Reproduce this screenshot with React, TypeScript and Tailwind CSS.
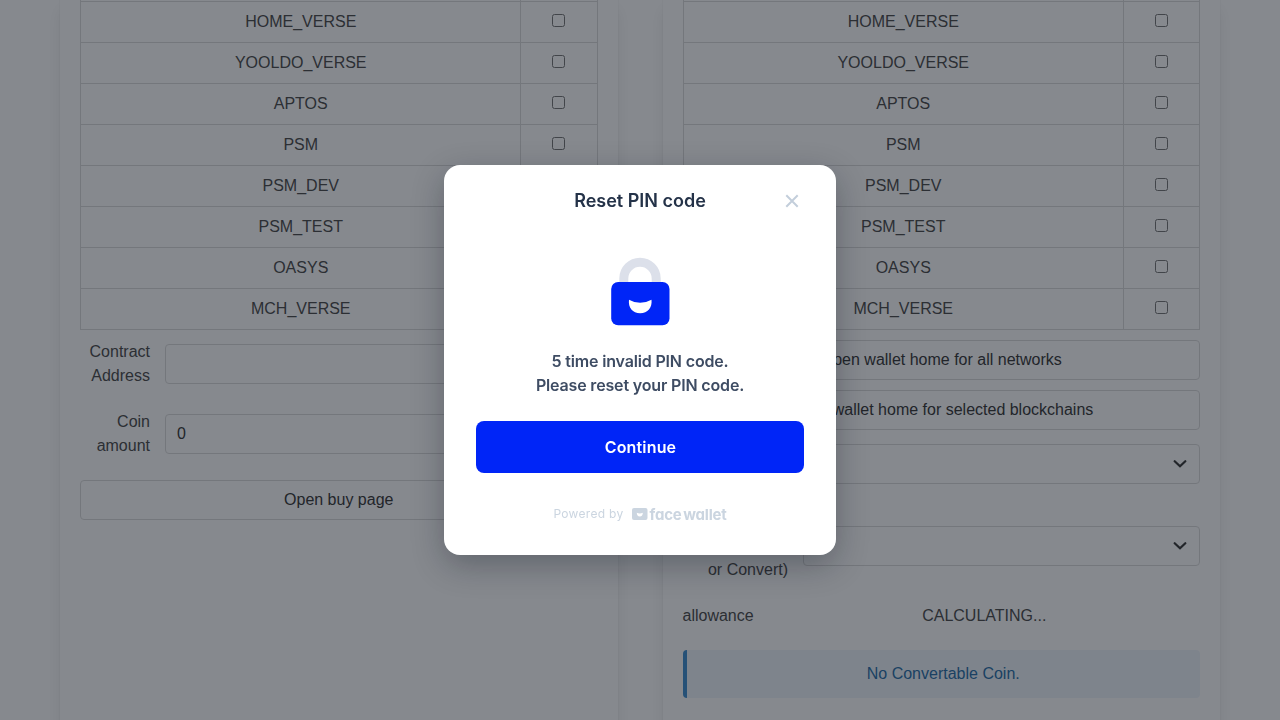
import React from 'react';

const networks = ['HOME_VERSE', 'YOOLDO_VERSE', 'APTOS', 'PSM', 'PSM_DEV', 'PSM_TEST', 'OASYS', 'MCH_VERSE'];

function NetworkTable() {
  return (
    <div className="border-x border-b border-[#dbdbdb]">
      <div className="flex h-px">
        <div className="flex-1" />
        <div className="w-[76.5px] border-l border-[#dbdbdb]" />
      </div>
      {networks.map((name) => (
        <label key={name} className="flex h-[41px] border-t border-[#dbdbdb]">
          <span className="flex-1 pt-2 pl-[0.5px] text-center">{name}</span>
          <span className="flex w-[76.5px] items-start justify-center border-l border-[#dbdbdb] pt-3">
            <input type="checkbox" className="m-0 size-[13px]" />
          </span>
        </label>
      ))}
    </div>
  );
}

function Card({ children }: { children: React.ReactNode }) {
  return (
    <section className="h-[760px] w-[557.5px] bg-white px-5 shadow-[0_8px_16px_-2px_rgba(10,10,10,0.1),0_0_0_1px_rgba(10,10,10,0.02)]">
      {children}
    </section>
  );
}

function Button({ children }: { children: React.ReactNode }) {
  return (
    <button className="flex h-10 w-full items-center justify-center rounded border border-[#dbdbdb] bg-white pb-px text-[#363636]">
      {children}
    </button>
  );
}

function Field({ label, value }: { label: string; value: string }) {
  return (
    <div className="flex gap-[15px]">
      <label className="w-[70px] text-right leading-6">{label}</label>
      <input
        readOnly
        value={value}
        className="mt-1 h-10 min-w-0 flex-1 rounded border border-[#dbdbdb] px-[11px] pb-px text-[#363636] outline-none"
      />
    </div>
  );
}

function SelectBox() {
  return (
    <div className="flex h-10 min-w-0 flex-1 items-center justify-end rounded border border-[#dbdbdb] px-3">
      <svg className="mb-px" width="14" height="8" viewBox="0 0 14 8" fill="none" stroke="#363636" strokeWidth="2.2">
        <path d="M1.7 1.2 7 6.3 12.3 1.2" strokeLinecap="round" />
      </svg>
    </div>
  );
}

function LockIcon() {
  return (
    <svg width="60" height="70" viewBox="0 0 60 70">
      <path d="M13.8 34V22.4a16.2 16.2 0 0 1 32.4 0V34" fill="none" stroke="#dce0ea" strokeWidth="9" />
      <rect x="1.2" y="26" width="58.3" height="43.2" rx="7" fill="#0025f7" />
      <path d="M19 43.7Q30 50 41.5 43.7C42.4 51.5 37.7 57.3 30.2 57.3S18 51.5 19 43.7Z" fill="#fff" />
    </svg>
  );
}

function BrandMark() {
  return (
    <span className="flex items-center">
      <svg width="16" height="12" viewBox="0 0 16 12">
        <rect width="15.5" height="12" rx="2" fill="#cbd5e0" />
        <path d="M4.8 4.8Q7.8 6.4 10.8 4.8C10.9 7.1 9.7 8.5 7.8 8.5S4.7 7.1 4.8 4.8Z" fill="#fff" />
      </svg>
      <span className="mt-px ml-[2px] whitespace-nowrap font-['Inter',sans-serif] text-[15px] leading-4 font-bold tracking-[-0.2px] [font-feature-settings:'cv11'] [word-spacing:-1.7px]">
        face wallet
      </span>
    </span>
  );
}

function ResetPinDialog() {
  return (
    <div className="fixed inset-0 flex items-center justify-center bg-[rgba(14,20,30,0.5)]">
      <div
        role="dialog"
        className="flex h-[390px] w-[392px] flex-col rounded-2xl bg-white px-8 font-['Inter',sans-serif] shadow-[0_10px_32px_rgba(10,15,30,0.3)]"
      >
        <header className="mt-6 grid h-6 grid-cols-[24px_1fr_24px] items-center">
          <h1 className="col-start-2 text-center text-[18px] leading-6 font-semibold text-[#243248]">Reset PIN code</h1>
          <button aria-label="Close" className="flex size-6 items-center justify-center">
            <svg width="14" height="14" viewBox="0 0 14 14" stroke="#c3cedb" strokeWidth="2">
              <path d="M1.3 1.3 12.7 12.7M12.7 1.3 1.3 12.7" />
            </svg>
          </button>
        </header>
        <div className="mt-[43px] flex justify-center">
          <LockIcon />
        </div>
        <p className="mt-[23px] text-center text-[16px] leading-6 font-semibold tracking-[-0.16px] text-[#3e4c63]">
          5 time invalid PIN code.
          <br />
          Please reset your PIN code.
        </p>
        <button className="mt-6 h-[52px] rounded-lg bg-[#0025f7] pl-px text-[16px] font-semibold tracking-[0.16px] text-white">Continue</button>
        <footer className="mt-[33px] flex h-4 items-center justify-center gap-2 text-[#cbd5e0]">
          <span className="text-[12px] leading-4 tracking-[0.3px]">Powered by</span>
          <BrandMark />
        </footer>
      </div>
    </div>
  );
}

export default function App() {
  return (
    <div className="h-[720px] overflow-hidden bg-white font-['Liberation_Sans',Arial,sans-serif] text-[16px] leading-6 text-[#4a4a4a]">
      <main className="flex justify-between px-[60px]">
        <Card>
          <NetworkTable />
          <div className="mt-[10px] flex flex-col gap-[22px]">
            <Field label="Contract Address" value="" />
            <Field label="Coin amount" value="0" />
            <Button>Open buy page</Button>
          </div>
        </Card>
        <Card>
          <NetworkTable />
          <div className="mt-[10px] flex flex-col gap-[10px]">
            <Button>Open wallet home for all networks</Button>
            <Button>Open wallet home for selected blockchains</Button>
          </div>
          <div className="mt-[14px] flex pl-[120.5px]">
            <SelectBox />
          </div>
          <div className="mt-[42px] flex h-14 gap-[15px]">
            <label className="w-[105.5px] self-end text-right">or Convert)</label>
            <SelectBox />
          </div>
          <div className="mt-[22px] flex">
            <span className="w-[86px]">allowance</span>
            <span className="flex-1 text-center">CALCULATING...</span>
          </div>
          <div className="mt-[22px] flex h-12 items-center justify-center rounded border-l-4 border-[#3e8ed0] bg-[#eff5fb] text-[#296fa8]">
            No Convertable Coin.
          </div>
        </Card>
      </main>
      <ResetPinDialog />
    </div>
  );
}
